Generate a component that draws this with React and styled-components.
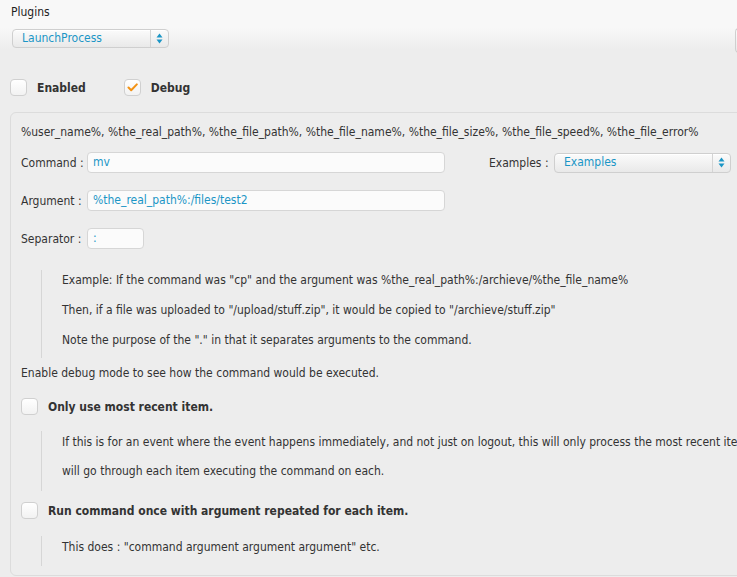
import React from "react";
import styled, { createGlobalStyle } from "styled-components";

const Global = createGlobalStyle`
  html, body { margin: 0; padding: 0; }
  body {
    background: #ededed;
    font-family: "DejaVu Sans Condensed", "DejaVu Sans", Verdana, sans-serif;
    font-size: 12px;
    color: #333;
    overflow: hidden;
  }
`;

const Page = styled.div`
  width: 737px;
  height: 577px;
  overflow: hidden;
  background: linear-gradient(#f8f8f8 0px, #f8f8f8 28px, #ededed 50px);
  padding: 4px 0 0 10px;
  box-sizing: border-box;
  position: relative;
`;

const Title = styled.div`
  color: #222;
  height: 16px;
  line-height: 16px;
  padding-left: 1px;
`;

const TopRow = styled.div`
  display: flex;
  justify-content: space-between;
  margin-top: 9px;
  height: 19px;
`;

const Select = styled.div`
  display: flex;
  align-items: stretch;
  width: ${(p) => p.$w}px;
  height: ${(p) => p.$h || 19}px;
  box-sizing: border-box;
  border: 1px solid #cfcfcf;
  border-radius: 4px;
  background: linear-gradient(#fbfbfb, #e9e9e9);
  box-shadow: inset 0 1px 0 #fff;
  margin-left: ${(p) => p.$ml || 0}px;
`;

const SelectText = styled.div`
  flex: 1;
  color: #1b96c6;
  line-height: 17px;
  padding-left: 9px;
`;

const SelectArrow = styled.div`
  width: 17px;
  border-left: 1px solid #d4d4d4;
  display: flex;
  align-items: center;
  justify-content: center;
`;

const EdgeBox = styled.div`
  width: 8px;
  height: 25px;
  margin-top: -1px;
  margin-right: -6px;
  border: 1px solid #cfcfcf;
  border-right: none;
  border-radius: 4px 0 0 4px;
  background: linear-gradient(#fbfbfb, #e9e9e9);
  box-sizing: border-box;
`;

const CheckRow = styled.div`
  display: flex;
  align-items: center;
  margin-top: ${(p) => p.$mt || 0}px;
`;

const Box = styled.div`
  width: 17px;
  height: 17px;
  box-sizing: border-box;
  border: 1px solid #d0d0d0;
  border-radius: 4px;
  background: linear-gradient(#ffffff, #f2f2f2);
  display: flex;
  align-items: center;
  justify-content: center;
  flex-shrink: 0;
`;

const CheckLabel = styled.span`
  font-weight: bold;
  color: #333;
  margin-left: ${(p) => p.$ml || 10}px;
  margin-right: ${(p) => p.$mr || 0}px;
`;

const Panel = styled.div`
  margin-top: 16px;
  width: 760px;
  height: 464px;
  box-sizing: border-box;
  border: 1px solid #dcdcdc;
  border-radius: 6px;
  padding: 11px 0 0 10px;
`;

const Line = styled.div`
  line-height: 16px;
  color: #333;
  white-space: nowrap;
`;

const FieldRow = styled.div`
  display: flex;
  align-items: center;
  margin-top: ${(p) => p.$mt}px;
  height: 21px;
`;

const Label = styled.span`
  width: 66px;
  color: #333;
  flex-shrink: 0;
`;

const Input = styled.div`
  width: ${(p) => p.$w}px;
  height: 21px;
  box-sizing: border-box;
  border: 1px solid #d6d6d6;
  border-radius: 4px;
  background: #fbfbfb;
  color: #1b96c6;
  padding-left: 5px;
  line-height: 19px;
`;

const ExLabel = styled.span`
  margin-left: 44px;
  width: 65px;
  flex-shrink: 0;
  color: #333;
`;

const Quote = styled.div`
  margin: ${(p) => p.$mt}px 0 0 20px;
  border-left: 1px solid #d6d6d6;
  padding: ${(p) => p.$pt || 3}px 0 ${(p) => p.$pb || 3}px 20px;
  display: flex;
  flex-direction: column;
  gap: ${(p) => p.$gap || 14}px;
`;

const Note = styled.div`
  margin-top: 7px;
  line-height: 16px;
`;

const Arrows = () => (
  <svg width="7" height="11" viewBox="0 0 7 11">
    <path d="M3.5 0.5 L6.5 4.5 H0.5 Z" fill="#1b96c6" />
    <path d="M3.5 10.5 L6.5 6.5 H0.5 Z" fill="#1b96c6" />
  </svg>
);

const Tick = () => (
  <svg width="11" height="9" viewBox="0 0 11 9">
    <path d="M1.5 4.5 L4.2 7.2 L9.8 1.4" stroke="#f39214" strokeWidth="2" fill="none" strokeLinecap="round" strokeLinejoin="round" />
  </svg>
);

export default function App() {
  return (
    <>
      <Global />
      <Page>
        <Title>Plugins</Title>
        <TopRow>
          <Select $w={157} $ml={2}>
            <SelectText>LaunchProcess</SelectText>
            <SelectArrow><Arrows /></SelectArrow>
          </Select>
          <EdgeBox />
        </TopRow>
        <CheckRow $mt={31}>
          <Box />
          <CheckLabel $mr={38}>Enabled</CheckLabel>
          <Box><Tick /></Box>
          <CheckLabel>Debug</CheckLabel>
        </CheckRow>
        <Panel>
          <Line>%user_name%, %the_real_path%, %the_file_path%, %the_file_name%, %the_file_size%, %the_file_speed%, %the_file_error%</Line>
          <FieldRow $mt={12}>
            <Label>Command :</Label>
            <Input $w={358}>mv</Input>
            <ExLabel>Examples :</ExLabel>
            <Select $w={177} $h={20}>
              <SelectText>Examples</SelectText>
              <SelectArrow><Arrows /></SelectArrow>
            </Select>
          </FieldRow>
          <FieldRow $mt={17}>
            <Label>Argument :</Label>
            <Input $w={358}>%the_real_path%:/files/test2</Input>
          </FieldRow>
          <FieldRow $mt={17}>
            <Label>Separator :</Label>
            <Input $w={57}>:</Input>
          </FieldRow>
          <Quote $mt={21} $pt={2} $pb={10}>
            <Line>Example: If the command was "cp" and the argument was %the_real_path%:/archieve/%the_file_name%</Line>
            <Line>Then, if a file was uploaded to "/upload/stuff.zip", it would be copied to "/archieve/stuff.zip"</Line>
            <Line>Note the purpose of the "." in that it separates arguments to the command.</Line>
          </Quote>
          <Note>Enable debug mode to see how the command would be executed.</Note>
          <CheckRow $mt={17}>
            <Box />
            <CheckLabel>Only use most recent item.</CheckLabel>
          </CheckRow>
          <Quote $mt={16} $pt={3} $pb={12} $gap={13}>
            <Line>If this is for an event where the event happens immediately, and not just on logout, this will only process the most recent item. Otherwise, it</Line>
            <Line>will go through each item executing the command on each.</Line>
          </Quote>
          <CheckRow $mt={11}>
            <Box />
            <CheckLabel>Run command once with argument repeated for each item.</CheckLabel>
          </CheckRow>
          <Quote $mt={17} $pt={3} $pb={11}>
            <Line>This does : "command argument argument argument" etc.</Line>
          </Quote>
        </Panel>
      </Page>
    </>
  );
}
